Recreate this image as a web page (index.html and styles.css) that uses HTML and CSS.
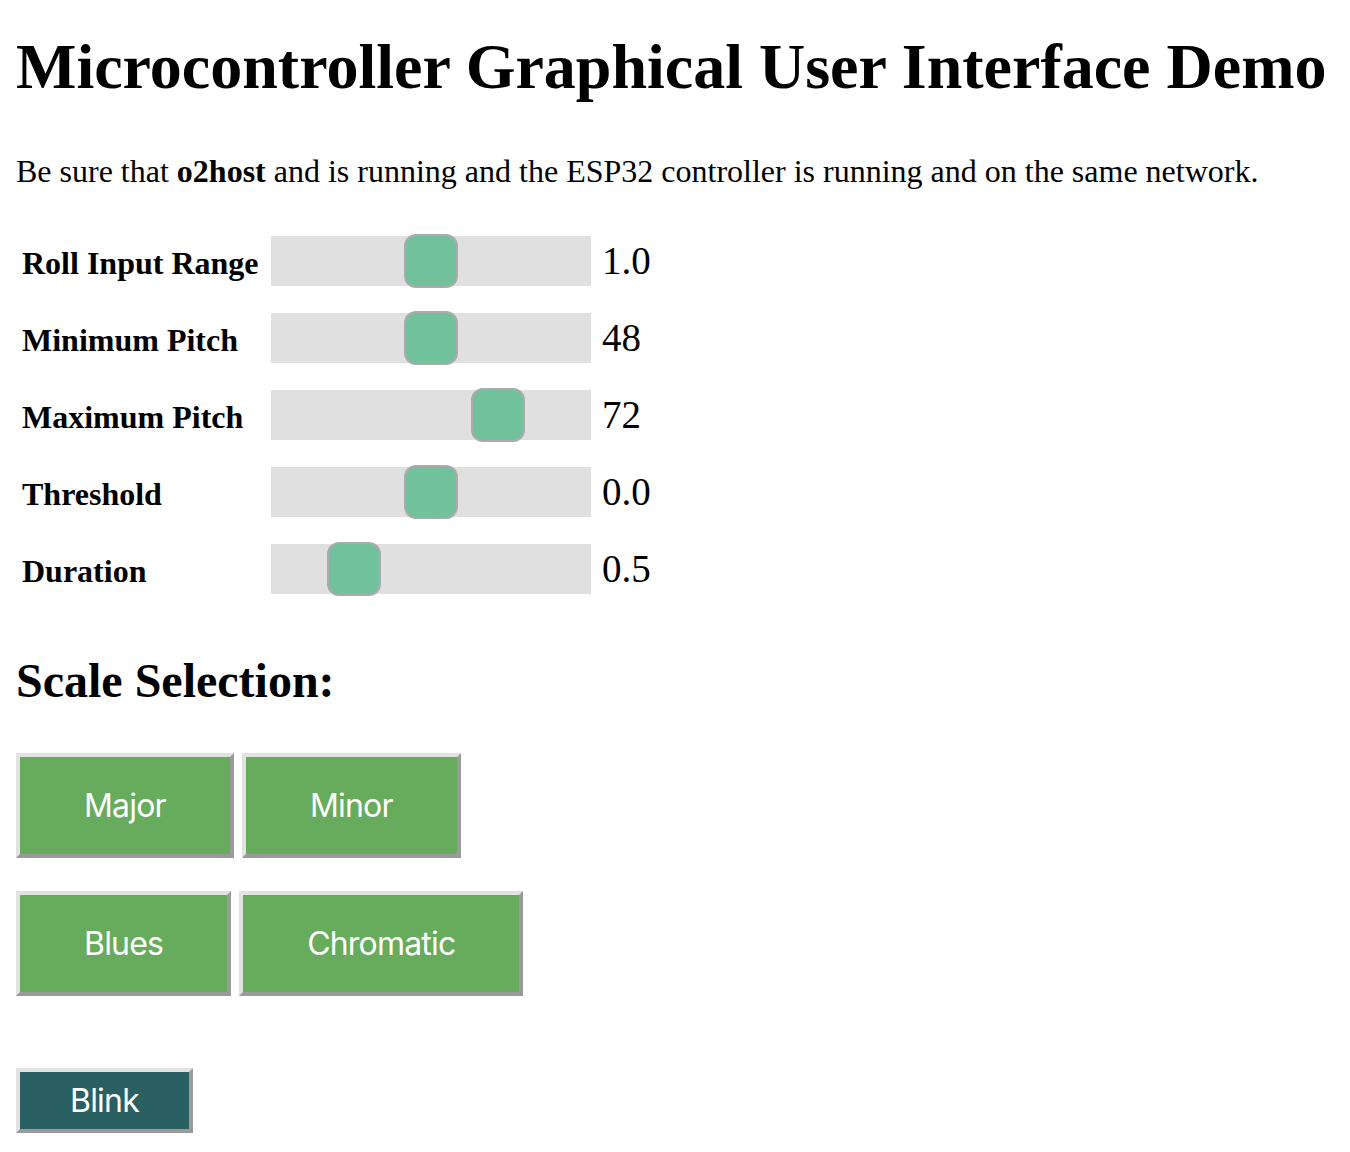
FILE: index.html
```html
<!DOCTYPE html>
<html lang="en">
<head>
<meta charset="utf-8">
<title>Microcontroller Graphical User Interface Demo</title>
<link rel="stylesheet" href="styles.css">
</head>
<body>
  <h1 class="title">Microcontroller Graphical User Interface Demo</h1>
  <p class="intro">Be sure that <b>o2host</b> and is running and the ESP32 controller is running and on the same network.</p>

  <div class="controls">
    <div class="control-row">
      <label class="control-label" for="roll">Roll Input Range</label>
      <input class="slider" id="roll" type="range" min="0" max="2" step="0.1" value="1">
      <span class="control-value">1.0</span>
    </div>
    <div class="control-row">
      <label class="control-label" for="minpitch">Minimum Pitch</label>
      <input class="slider" id="minpitch" type="range" min="24" max="72" step="1" value="48">
      <span class="control-value">48</span>
    </div>
    <div class="control-row">
      <label class="control-label" for="maxpitch">Maximum Pitch</label>
      <input class="slider" id="maxpitch" type="range" min="36" max="84" step="1" value="72">
      <span class="control-value">72</span>
    </div>
    <div class="control-row">
      <label class="control-label" for="threshold">Threshold</label>
      <input class="slider" id="threshold" type="range" min="-1" max="1" step="0.1" value="0">
      <span class="control-value">0.0</span>
    </div>
    <div class="control-row">
      <label class="control-label" for="duration">Duration</label>
      <input class="slider" id="duration" type="range" min="0.1" max="2" step="0.1" value="0.5">
      <span class="control-value">0.5</span>
    </div>
  </div>

  <h2 class="section-title">Scale Selection:</h2>

  <div class="button-row">
    <button class="btn btn-scale" type="button">Major</button>
    <button class="btn btn-scale" type="button">Minor</button>
  </div>
  <div class="button-row">
    <button class="btn btn-scale" type="button">Blues</button>
    <button class="btn btn-scale" type="button">Chromatic</button>
  </div>

  <div class="blink-row">
    <button class="btn btn-blink" type="button">Blink</button>
  </div>
</body>
</html>
```

FILE: styles.css
```css
html, body {
  background: #ffffff;
}

body {
  margin: 0;
  padding: 0 16px;
  font-family: "Liberation Serif", "Times New Roman", serif;
  color: #000000;
}

.title {
  margin: 30px 0 0;
  font-size: 64px;
  line-height: 74px;
  font-weight: bold;
  white-space: nowrap;
}

.intro {
  margin: 49px 0 0;
  font-size: 32px;
  line-height: 37px;
}

.controls {
  margin-top: 32px;
  padding-left: 6px;
  display: flex;
  flex-direction: column;
}

.control-row {
  display: grid;
  grid-template-columns: 249px 320px auto;
  align-items: center;
  height: 77px;
}

.control-label {
  font-size: 32px;
  line-height: 37px;
  font-weight: bold;
  padding-top: 6px;
}

.control-value {
  font-size: 39px;
  line-height: 45px;
  padding-left: 11px;
}

.slider {
  -webkit-appearance: none;
  appearance: none;
  margin: 0;
  width: 320px;
  height: 50px;
  background: #e0e0e0;
  outline: none;
  border: none;
}

.slider::-webkit-slider-thumb {
  -webkit-appearance: none;
  appearance: none;
  box-sizing: border-box;
  width: 54px;
  height: 54px;
  border: 2px solid #ababab;
  border-radius: 12px;
  background: #71c19d;
  cursor: pointer;
}

.section-title {
  margin: 46px 0 0;
  font-size: 48px;
  line-height: 55px;
  font-weight: bold;
}

.button-row {
  display: flex;
  gap: 8px;
  margin-top: 45px;
}

.button-row + .button-row {
  margin-top: 33px;
}

.btn {
  font-family: Inter, "Noto Sans", sans-serif;
  font-size: 32px;
  line-height: 37px;
  letter-spacing: -0.8px;
  color: #ffffff;
  border-style: solid;
  border-width: 4px;
  border-color: #e2e2e2 #9a9a9a #9a9a9a #e2e2e2;
  cursor: pointer;
}

.btn-scale {
  background: #67ab5d;
  padding: 30px 64px;
}

.blink-row {
  margin-top: 72px;
  display: flex;
}

.btn-blink {
  background: #2a6062;
  padding: 10px 50px;
}
```
